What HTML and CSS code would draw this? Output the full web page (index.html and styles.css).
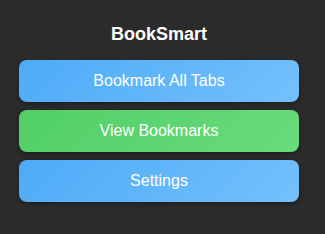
FILE: index.html
```html
<!DOCTYPE html>
<html lang="en">
<head>
	<meta charset="UTF-8">
	<title>BookSmart</title>
	<link rel="stylesheet" href="styles.css">
</head>
<body>
<div class="popup">
	<h1 class="popup__title">BookSmart</h1>
	<div class="popup-actions">
		<button class="popup-actions__button popup-actions__button--blue" id="bookmarkAllBtn">Bookmark All Tabs</button>
		<button class="popup-actions__button popup-actions__button--green" id="viewBtn">View Bookmarks</button>
		<button class="popup-actions__button popup-actions__button--blue" id="settingsBtn">Settings</button>
	</div>
</div>
</body>
</html>
```

FILE: styles.css
```css
html,
body {
    margin: 0;
    height: 100%;
    background-color: #2b2b2b;
}

body {
    font-family: "Liberation Sans", Arial, sans-serif;
    color: #ffffff;
}

.popup {
    width: 280px;
    padding: 23px 19px 20px;
}

.popup__title {
    margin: 0 0 15px;
    font-size: 18px;
    font-weight: bold;
    line-height: 22px;
    text-align: center;
}

.popup-actions {
    display: flex;
    flex-direction: column;
    gap: 8px;
}

.popup-actions__button {
    height: 42px;
    border: none;
    border-radius: 8px;
    color: #ffffff;
    font-family: inherit;
    font-size: 16px;
    cursor: pointer;
    box-shadow: 0 2px 4px rgba(0, 0, 0, 0.3);
}

.popup-actions__button--blue {
    background: linear-gradient(135deg, #4dabf7, #74c0fc);
}

.popup-actions__button--green {
    background: linear-gradient(135deg, #51cf66, #69db7c);
}
```
